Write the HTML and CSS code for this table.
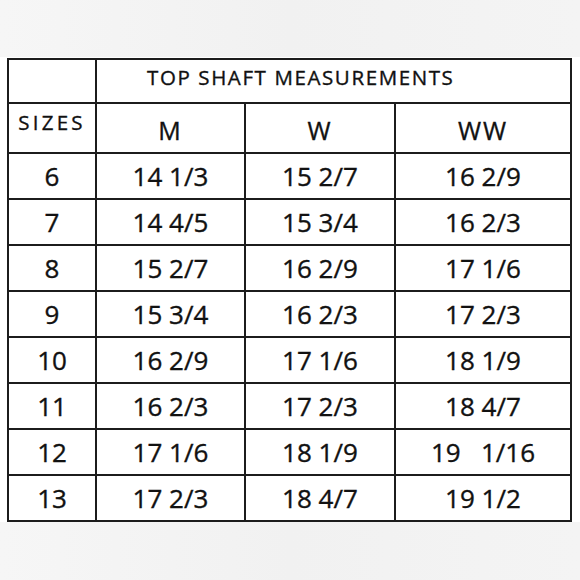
FILE: index.html
```html
<!DOCTYPE html>
<html lang="en">
<head>
<meta charset="utf-8">
<title>Top Shaft Measurements</title>
<link rel="stylesheet" href="styles.css">
</head>
<body>
<div class="band band-top"></div>
<div class="sheet">
  <div class="chart">
    <div class="cell corner"></div>
    <div class="cell title">TOP SHAFT MEASUREMENTS</div>
    <div class="cell sizes">SIZES</div>
    <div class="cell col">M</div>
    <div class="cell col">W</div>
    <div class="cell col">WW</div>

    <div class="cell">6</div><div class="cell">14 1/3</div><div class="cell">15 2/7</div><div class="cell">16 2/9</div>
    <div class="cell">7</div><div class="cell">14 4/5</div><div class="cell">15 3/4</div><div class="cell">16 2/3</div>
    <div class="cell">8</div><div class="cell">15 2/7</div><div class="cell">16 2/9</div><div class="cell">17 1/6</div>
    <div class="cell">9</div><div class="cell">15 3/4</div><div class="cell">16 2/3</div><div class="cell">17 2/3</div>
    <div class="cell">10</div><div class="cell">16 2/9</div><div class="cell">17 1/6</div><div class="cell">18 1/9</div>
    <div class="cell">11</div><div class="cell">16 2/3</div><div class="cell">17 2/3</div><div class="cell">18 4/7</div>
    <div class="cell">12</div><div class="cell">17 1/6</div><div class="cell">18 1/9</div><div class="cell pre">19   1/16</div>
    <div class="cell">13</div><div class="cell">17 2/3</div><div class="cell">18 4/7</div><div class="cell">19 1/2</div>
  </div>
</div>
<div class="band band-bottom"></div>
</body>
</html>
```
FILE: styles.css
```css
html, body {
  margin: 0;
  padding: 0;
  background: #ffffff;
}
body {
  font-family: "Open Sans", "DejaVu Sans", sans-serif;
  color: #111111;
  width: 580px;
  height: 580px;
  overflow: hidden;
  -webkit-text-stroke: 0.35px #111111;
}
.band {
  background: linear-gradient(90deg, #f6f6f6 0%, #f1f1f1 50%, #f4f4f4 100%);
}
.band-top {
  height: 57px;
}
.band-bottom {
  height: 58px;
}
.sheet {
  padding: 1px 0 0 7px;
  background: #ffffff;
}
.chart {
  display: grid;
  grid-template-columns: 86px 147px 148px 174px;
  grid-template-rows: 42px 48px repeat(8, 44px);
  gap: 2px;
  padding: 2px;
  width: 565px;
  box-sizing: border-box;
  background: #1c1c1c;
}
.cell {
  background: #ffffff;
  display: flex;
  align-items: center;
  justify-content: center;
  font-size: 26px;
  line-height: 1;
  box-sizing: border-box;
}
.title {
  grid-column: 2 / 5;
  justify-content: flex-start;
  padding: 0 0 8px 50px;
  font-size: 20.5px;
  letter-spacing: 1.6px;
}
.sizes {
  align-items: flex-start;
  padding-top: 8px;
  font-size: 20.5px;
  letter-spacing: 3.2px;
}
.col {
  font-size: 25px;
  padding-top: 5px;
  letter-spacing: 2px;
}
.pre {
  white-space: pre;
}
```
